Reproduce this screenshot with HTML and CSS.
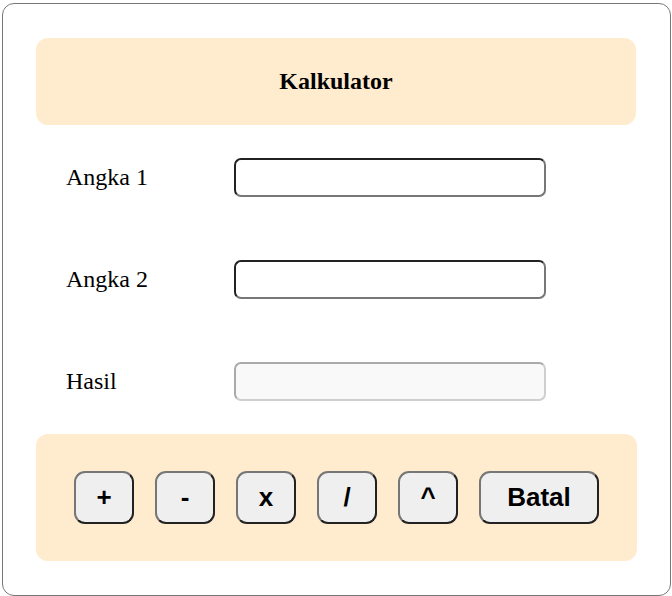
FILE: index.html
```html
<!DOCTYPE html>
<html>
<head>
<meta charset="utf-8">
<link rel="stylesheet" href="styles.css">
</head>
<body>
<div class="calc">
  <div class="header">Kalkulator</div>
  <div class="form">
    <div class="row"><label class="label">Angka 1</label><input class="field" type="text"></div>
    <div class="row"><label class="label">Angka 2</label><input class="field" type="text"></div>
    <div class="row"><label class="label">Hasil</label><input class="field field-disabled" type="text" disabled></div>
  </div>
  <div class="actions">
    <button class="btn">+</button>
    <button class="btn">-</button>
    <button class="btn">x</button>
    <button class="btn">/</button>
    <button class="btn">^</button>
    <button class="btn btn-wide">Batal</button>
  </div>
</div>
</body>
</html>
```
FILE: styles.css
```css
html, body {
  margin: 0;
  padding: 0;
  background: #ffffff;
}
body {
  padding: 3px 0 0 2px;
  font-family: "Liberation Serif", "Times New Roman", serif;
}
.calc {
  box-sizing: border-box;
  width: 669px;
  height: 593px;
  border: 1px solid #777777;
  border-radius: 12px;
  padding: 34px 33px 0 33px;
}
.header {
  width: 600px;
  height: 87px;
  background: #ffebcd;
  border-radius: 12px;
  display: flex;
  align-items: center;
  justify-content: center;
  font-weight: bold;
  font-size: 24px;
  color: #000;
}
.form {
  display: flex;
  flex-direction: column;
  gap: 63px;
  padding: 33px 0;
}
.row {
  display: flex;
  align-items: center;
  padding-left: 30px;
}
.label {
  width: 168px;
  font-size: 24px;
  color: #000;
}
.field {
  box-sizing: border-box;
  width: 312px;
  height: 39px;
  margin: 0;
  border: 2px solid;
  border-color: #222222 #777777 #777777 #222222;
  border-radius: 7px;
  background: #ffffff;
  padding: 0 6px;
  font-size: 16px;
  outline: none;
}
.field-disabled {
  border-color: #aaaaaa #cfcfcf #cfcfcf #aaaaaa;
  background: #f9f9f9;
}
.actions {
  height: 127px;
  box-sizing: border-box;
  background: #ffebcd;
  border-radius: 12px;
  display: flex;
  align-items: center;
  gap: 21px;
  padding-left: 38px;
}
.btn {
  box-sizing: border-box;
  width: 60px;
  height: 53px;
  margin: 0;
  padding: 0;
  border: 2px solid;
  border-color: #767676 #222222 #222222 #767676;
  border-radius: 11px;
  background: #efefef;
  font-family: "Liberation Sans", Arial, sans-serif;
  font-weight: bold;
  font-size: 26px;
  color: #000;
}
.btn-wide {
  width: 120px;
}
```
